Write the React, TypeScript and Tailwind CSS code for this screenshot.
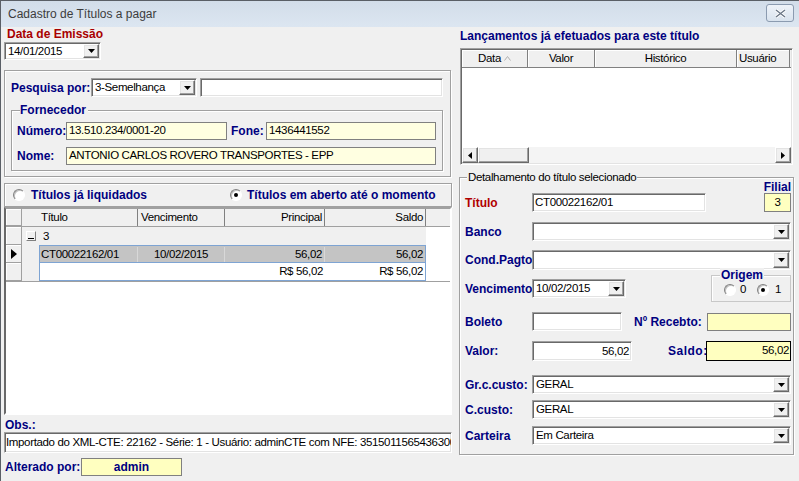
import React from 'react';

const LBL = "font-['Liberation_Sans',Arial,sans-serif] font-bold text-[12px] leading-[14px] text-[#000080] whitespace-nowrap";
const TXT = "font-['Liberation_Sans',Arial,sans-serif] text-[11.5px] tracking-[-0.35px] leading-[15px] text-black whitespace-nowrap";
const SUNKEN = 'border border-t-[#a0a0a0] border-l-[#a0a0a0] border-b-white border-r-white shadow-[inset_1px_1px_0_#696969,inset_-1px_-1px_0_#e3e3e3] p-[1px]';
const RAISED = 'border border-t-white border-l-white border-b-[#696969] border-r-[#696969] shadow-[inset_-1px_-1px_0_#a0a0a0,inset_1px_1px_0_#e3e3e3] bg-[#f0f0f0]';
const ETCHED = 'border border-[#a0a0a0] shadow-[inset_1px_1px_0_#fff,1px_1px_0_#fff]';
const FLAT = 'border border-[#808080]';

const Down = () => (
  <svg width="7" height="4" viewBox="0 0 7 4">
    <path d="M0 0h7L3.5 4z" fill="#000" />
  </svg>
);

const DropBtn = () => (
  <div className={`${RAISED} w-[16px] h-full shrink-0 flex items-center justify-center`}>
    <Down />
  </div>
);

// combo box with the classic sunken frame
const Combo = ({ value = '', className = '' }: { value?: string; className?: string }) => (
  <div className={`${SUNKEN} bg-white flex items-stretch ${className}`}>
    <div className={`${TXT} flex-1 flex items-center pl-[2px] overflow-hidden`}>{value}</div>
    <DropBtn />
  </div>
);

const Radio = ({ checked = false }: { checked?: boolean }) => (
  <span className="relative inline-block shrink-0 w-[12px] h-[12px] rounded-full bg-white border border-t-[#808080] border-l-[#808080] border-b-white border-r-white shadow-[inset_1px_1px_0_#c0c0c0]">
    {checked && <span className="absolute left-[3px] top-[3px] w-[4px] h-[4px] rounded-full bg-black" />}
  </span>
);

const Row = ({ label, red, children, className = '' }: { label: string; red?: boolean; children?: React.ReactNode; className?: string }) => (
  <div className={`flex items-center ${className}`}>
    <div className={`${LBL} w-[67px] shrink-0 ${red ? 'text-[#b00000]' : ''}`}>{label}</div>
    {children}
  </div>
);

const IndCell = ({ children }: { children?: React.ReactNode }) => (
  <div className="w-[16px] h-full shrink-0 bg-[#f0f0f0] border-r border-b border-[#a0a0a0] shadow-[inset_1px_1px_0_#fff] flex items-center justify-center">
    {children}
  </div>
);

export default function App() {
  return (
    <div className="w-[799px] h-[481px] bg-[#f0f0f0] overflow-hidden border-t border-l border-[#5a5f66] flex flex-col">
      {/* title bar */}
      <div className="h-[26px] shrink-0 bg-gradient-to-b from-[#d2dde9] to-[#dce6f1] flex items-start pl-[7px] pr-[5px]">
        <span className="font-['Liberation_Sans',Arial,sans-serif] text-[12px] leading-[26px] text-[#3c3c3c]">Cadastro de Títulos a pagar</span>
        <div className="ml-auto mt-[3px] w-[28px] h-[18px] rounded-[3px] border border-[#8b9bb0] bg-gradient-to-b from-[#eef3f9] to-[#d9e3ee] flex items-center justify-center">
          <svg width="11" height="9" viewBox="0 0 11 9">
            <path d="M1 1l9 7M10 1L1 8" stroke="#fff" strokeWidth="3" />
            <path d="M1 1l9 7M10 1L1 8" stroke="#6b7787" strokeWidth="1.4" />
          </svg>
        </div>
      </div>

      <div className="flex flex-1">
        {/* left column */}
        <div className="w-[448px] ml-[3px] flex flex-col">
          <div className={`${LBL} text-[#a80000] h-[15px] leading-[15px] pl-[3px]`}>Data de Emissão</div>
          <Combo value="14/01/2015" className="w-[97px] h-[18px]" />

          <div className={`${ETCHED} mt-[10px] w-[447px] h-[107px]`}>
            <div className="mt-[7px] h-[19px] pl-[6px] flex items-center">
              <div className={`${LBL} w-[80px]`}>Pesquisa por:</div>
              <Combo value="3-Semelhança" className="w-[106px] h-[19px]" />
              <div className={`${SUNKEN} bg-white ml-[3px] w-[243px] h-[19px]`} />
            </div>

            <div className={`${ETCHED} relative mt-[13px] ml-[6px] w-[432px] h-[61px]`}>
              <span className={`${LBL} absolute left-[8px] -top-[8px] bg-[#f0f0f0] pr-[2px]`}>Fornecedor</span>
              <div className="mt-[11px] h-[18px] pl-[5px] flex items-center">
                <div className={`${LBL} w-[49px]`}>Número:</div>
                <div className={`${FLAT} ${TXT} bg-[#ffffe1] w-[161px] h-[18px] pl-[2px]`}>13.510.234/0001-20</div>
                <div className={`${LBL} ml-[4px] w-[35px]`}>Fone:</div>
                <div className={`${FLAT} ${TXT} bg-[#ffffe1] w-[170px] h-[18px] pl-[2px]`}>1436441552</div>
              </div>
              <div className="mt-[7px] h-[18px] pl-[5px] flex items-center">
                <div className={`${LBL} w-[49px]`}>Nome:</div>
                <div className={`${FLAT} ${TXT} bg-[#ffffe1] w-[370px] h-[18px] pl-[2px]`}>ANTONIO CARLOS ROVERO TRANSPORTES - EPP</div>
              </div>
            </div>
          </div>

          {/* radio bar */}
          <div className={`${ETCHED} mt-[6px] h-[24px] flex items-center pl-[8px]`}>
            <div className="w-[217px] flex items-center gap-[6px]">
              <Radio />
              <span className={LBL}>Títulos já liquidados</span>
            </div>
            <div className="flex items-center gap-[5px]">
              <Radio checked />
              <span className={LBL}>Títulos em aberto até o momento</span>
            </div>
          </div>

          {/* titles grid */}
          <div className="h-[208px] border-2 border-t-[#a0a0a0] border-l-[#696969] border-b-white border-r-white bg-white flex flex-col">
            <div className="h-[18px] flex bg-[#f0f0f0] border-b border-[#a0a0a0]">
              <IndCell />
              <div className={`${TXT} w-[116px] pl-[19px] border-r border-[#808080] leading-[17px]`}>Título</div>
              <div className={`${TXT} w-[87px] pl-[3px] border-r border-[#808080] leading-[17px]`}>Vencimento</div>
              <div className={`${TXT} w-[100px] pr-[2px] text-right border-r border-[#808080] leading-[17px]`}>Principal</div>
              <div className={`${TXT} w-[101px] pr-[2px] text-right border-r border-[#808080] leading-[17px]`}>Saldo</div>
              <div className="flex-1" />
            </div>
            <div className="flex flex-col border-b border-[#a0a0a0]">
              <div className="h-[18px] flex">
                <IndCell />
                <div className="w-[404px] bg-[#f0f0f0] flex items-center">
                  <div className="ml-[4px] w-[10px] h-[10px] border border-[#808080] border-t-white border-l-white bg-[#f0f0f0] flex items-end justify-center pb-[1px]">
                    <div className="w-[6px] h-[1px] bg-black" />
                  </div>
                  <span className={`${TXT} ml-[7px]`}>3</span>
                </div>
              </div>
              <div className="h-[18px] flex">
                <IndCell>
                  <svg width="6" height="10" viewBox="0 0 6 10"><path d="M0 0l6 5-6 5z" fill="#000" /></svg>
                </IndCell>
                <div className="w-[17px] bg-[#f0f0f0]" />
                <div className={`${TXT} w-[387px] bg-[#c4c4c4] border border-[#7ea4d3] flex items-center`}>
                  <div className="w-[98px] pl-[1px] border-r border-[#d8d8d8]">CT00022162/01</div>
                  <div className="w-[87px] text-center border-r border-[#d8d8d8]">10/02/2015</div>
                  <div className="w-[100px] text-right pr-[2px] border-r border-[#d8d8d8]">56,02</div>
                  <div className="flex-1 text-right pr-[2px]">56,02</div>
                </div>
              </div>
              <div className="h-[18px] flex">
                <IndCell />
                <div className="w-[17px] bg-[#f0f0f0]" />
                <div className={`${TXT} w-[387px] bg-white border border-t-0 border-[#7ea4d3] flex items-center`}>
                  <div className="w-[185px]" />
                  <div className="w-[100px] text-right pr-[2px]">R$ 56,02</div>
                  <div className="flex-1 text-right pr-[2px]">R$ 56,02</div>
                </div>
              </div>
            </div>
          </div>

          <div className={`${LBL} h-[17px] pt-[3px] pl-[1px]`}>Obs.:</div>
          <div className={`${SUNKEN} ${TXT} bg-white h-[21px] pl-[1px] flex items-center overflow-hidden`}>
            Importado do XML-CTE: 22162 - Série: 1 - Usuário: adminCTE com NFE: 35150115654363000
          </div>
          <div className="mt-[5px] h-[18px] flex items-center">
            <div className={`${LBL} w-[77px] pl-[1px]`}>Alterado por:</div>
            <div className={`${FLAT} ${LBL} bg-[#ffffc0] w-[101px] h-[18px] text-center leading-[16px]`}>admin</div>
          </div>
        </div>

        {/* right column */}
        <div className="w-[335px] ml-[7px] flex flex-col">
          <div className={`${LBL} mt-[2px] pl-[1px]`}>Lançamentos já efetuados para este título</div>
          <div className={`${SUNKEN} mt-[5px] ml-[1px] w-[333px] h-[117px] bg-white flex flex-col`}>
            <div className={`${TXT} h-[18px] flex bg-[#f0f0f0] text-[#000]`}>
              <div className="w-[66px] border-r border-b border-[#808080] shadow-[inset_1px_1px_0_#fff] flex items-center justify-center gap-[3px]">
                Data
                <svg width="7" height="5" viewBox="0 0 7 5"><path d="M0.5 4.5L3.5 0.5l3 4" stroke="#b0b0b0" fill="none" /></svg>
              </div>
              <div className="w-[67px] border-r border-b border-[#808080] shadow-[inset_1px_1px_0_#fff] text-center leading-[17px]">Valor</div>
              <div className="w-[142px] border-r border-b border-[#808080] shadow-[inset_1px_1px_0_#fff] text-center leading-[17px]">Histórico</div>
              <div className="w-[53px] border-r border-b border-[#808080] shadow-[inset_1px_1px_0_#fff] pl-[2px] leading-[17px]">Usuário</div>
              <div className="flex-1 border-b border-[#808080]" />
            </div>
            <div className="flex-1" />
            <div className="h-[16px] flex bg-[#f4f4f4]">
              <div className={`${RAISED} w-[16px] flex items-center justify-center`}>
                <svg width="4" height="7" viewBox="0 0 4 7"><path d="M4 0v7L0 3.5z" fill="#000" /></svg>
              </div>
              <div className={`${RAISED} w-[51px]`} />
              <div className="flex-1" />
              <div className={`${RAISED} w-[16px] flex items-center justify-center`}>
                <svg width="4" height="7" viewBox="0 0 4 7"><path d="M0 0v7l4-3.5z" fill="#000" /></svg>
              </div>
            </div>
          </div>

          {/* detail group */}
          <div className={`${ETCHED} relative mt-[12px] h-[278px] pl-[5px] pr-[2px] flex flex-col`}>
            <span className={`${TXT} absolute left-[7px] -top-[8px] bg-[#f0f0f0] px-[1px] text-[#222]`}>Detalhamento do título selecionado</span>

            <div className="mt-[2px] h-[32px] flex items-end">
              <Row label="Título" red className="h-[19px]">
                <div className={`${SUNKEN} ${TXT} bg-white w-[174px] h-[19px] pl-[2px]`}>CT00022162/01</div>
              </Row>
              <div className="ml-auto flex flex-col items-end">
                <div className={`${LBL} h-[13px] leading-[13px]`}>Filial</div>
                <div className={`${FLAT} ${TXT} bg-[#ffffc0] w-[27px] h-[19px] text-center leading-[17px]`}>3</div>
              </div>
            </div>

            <Row label="Banco" className="mt-[10px] h-[19px]">
              <Combo className="flex-1 h-[19px]" />
            </Row>
            <Row label="Cond.Pagto:" className="mt-[9px] h-[20px]">
              <Combo className="flex-1 h-[20px]" />
            </Row>

            <div className="h-[32px] flex items-start">
              <Row label="Vencimento" className="mt-[9px] h-[19px]">
                <Combo value="10/02/2015" className="w-[94px] h-[19px]" />
              </Row>
              <div className="ml-auto mt-[5px] w-[80px] h-[27px] relative border border-[#c8c8c8] shadow-[inset_1px_1px_0_#fff] flex items-center pl-[12px] pt-[2px]">
                <span className={`${LBL} absolute left-[8px] -top-[8px] bg-[#f0f0f0] px-[1px]`}>Origem</span>
                <Radio />
                <span className={`${TXT} ml-[4px] text-[#444]`}>0</span>
                <span className="ml-[11px]"><Radio checked /></span>
                <span className={`${TXT} ml-[6px] text-[#444]`}>1</span>
              </div>
            </div>

            <Row label="Boleto" className="mt-[10px] h-[19px]">
              <div className={`${SUNKEN} bg-white w-[90px] h-[19px]`} />
              <div className={`${LBL} ml-[12px] w-[73px]`}>Nº Recebto:</div>
              <div className={`${FLAT} bg-[#ffffc0] w-[84px] h-[18px]`} />
            </Row>
            <Row label="Valor:" className="mt-[10px] h-[20px]">
              <div className={`${SUNKEN} ${TXT} bg-white w-[100px] h-[20px] text-right pr-[2px] leading-[16px]`}>56,02</div>
              <div className={`${LBL} ml-[36px] w-[38px] tracking-[0.5px]`}>Saldo:</div>
              <div className={`border border-black ${TXT} bg-[#ffffc0] w-[85px] h-[20px] text-right pr-[1px] leading-[17px]`}>56,02</div>
            </Row>

            <Row label="Gr.c.custo:" className="mt-[14px] h-[19px]">
              <Combo value="GERAL" className="flex-1 h-[19px]" />
            </Row>
            <Row label="C.custo:" className="mt-[6px] h-[19px]">
              <Combo value="GERAL" className="flex-1 h-[19px]" />
            </Row>
            <Row label="Carteira" className="mt-[7px] h-[19px]">
              <Combo value="Em Carteira" className="flex-1 h-[19px]" />
            </Row>
          </div>
        </div>
      </div>
    </div>
  );
}
